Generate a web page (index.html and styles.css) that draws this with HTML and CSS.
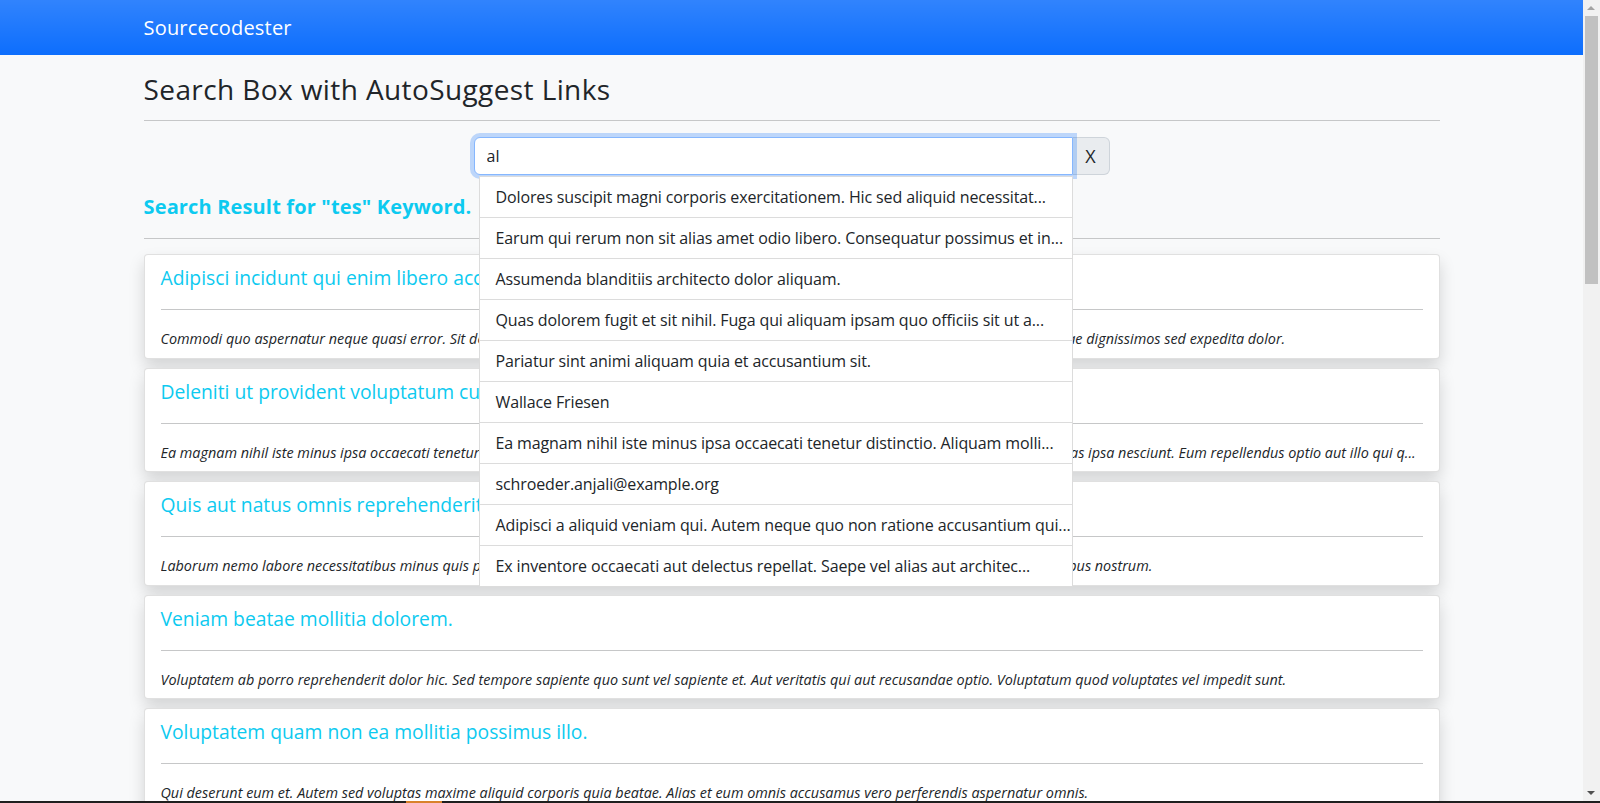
FILE: index.html
```html
<!DOCTYPE html>
<html lang="en">
<head>
<meta charset="utf-8">
<title>Search Box with AutoSuggest Links</title>
<link rel="stylesheet" href="styles.css">
</head>
<body>
<nav class="navbar">
  <div class="container">
    <a class="brand" href="#">Sourcecodester</a>
  </div>
</nav>
<main class="container">
  <h3 class="page-title">Search Box with AutoSuggest Links</h3>
  <hr class="rule">
  <div class="search-row">
    <div class="search-group">
      <div class="input-wrap">
        <input class="search-input" type="text" value="al">
        <ul class="suggest">
          <li class="suggest-item">Dolores suscipit magni corporis exercitationem. Hic sed aliquid necessitat...</li>
          <li class="suggest-item">Earum qui rerum non sit alias amet odio libero. Consequatur possimus et in...</li>
          <li class="suggest-item">Assumenda blanditiis architecto dolor aliquam.</li>
          <li class="suggest-item">Quas dolorem fugit et sit nihil. Fuga qui aliquam ipsam quo officiis sit ut a...</li>
          <li class="suggest-item">Pariatur sint animi aliquam quia et accusantium sit.</li>
          <li class="suggest-item">Wallace Friesen</li>
          <li class="suggest-item">Ea magnam nihil iste minus ipsa occaecati tenetur distinctio. Aliquam molli...</li>
          <li class="suggest-item">schroeder.anjali@example.org</li>
          <li class="suggest-item">Adipisci a aliquid veniam qui. Autem neque quo non ratione accusantium qui...</li>
          <li class="suggest-item">Ex inventore occaecati aut delectus repellat. Saepe vel alias aut architec...</li>
        </ul>
      </div>
      <button class="clear-btn" type="button">X</button>
    </div>
  </div>
  <h4 class="result-title">Search Result for "tes" Keyword.</h4>
  <hr class="rule result-rule">
  <div class="results">
    <div class="card">
      <h5 class="card-title">Adipisci incidunt qui enim libero accusamus.</h5>
      <hr class="card-rule">
      <p class="card-text">Commodi quo aspernatur neque quasi error. Sit dolorem ut nesciunt rerum voluptas. Quis eos omnis voluptatem aut quae. Ut aut re fugiat. Quae dignissimos sed expedita dolor.</p>
    </div>
    <div class="card">
      <h5 class="card-title">Deleniti ut provident voluptatum cum.</h5>
      <hr class="card-rule">
      <p class="card-text">Ea magnam nihil iste minus ipsa occaecati tenetur distinctio. Aliquam mollitia et quia quisquam. Et fugit est sint, sed. Voluptas et dolores voluptas ipsa nesciunt. Eum repellendus optio aut illo qui q...</p>
    </div>
    <div class="card">
      <h5 class="card-title">Quis aut natus omnis reprehenderit.</h5>
      <hr class="card-rule">
      <p class="card-text">Laborum nemo labore necessitatibus minus quis perspiciatis. Et aut aliquam dolorem eos sed. Quia enim sint aut esse vero. Et aut omnis doloribus nostrum.</p>
    </div>
    <div class="card">
      <h5 class="card-title">Veniam beatae mollitia dolorem.</h5>
      <hr class="card-rule">
      <p class="card-text">Voluptatem ab porro reprehenderit dolor hic. Sed tempore sapiente quo sunt vel sapiente et. Aut veritatis qui aut recusandae optio. Voluptatum quod voluptates vel impedit sunt.</p>
    </div>
    <div class="card">
      <h5 class="card-title">Voluptatem quam non ea mollitia possimus illo.</h5>
      <hr class="card-rule">
      <p class="card-text">Qui deserunt eum et. Autem sed voluptas maxime aliquid corporis quia beatae. Alias et eum omnis accusamus vero perferendis aspernatur omnis.</p>
    </div>
    <div class="card">
      <h5 class="card-title">Aliquid testimonium sed quia.</h5>
      <hr class="card-rule">
      <p class="card-text">Est tempore aut sint quis. Nihil et aut est dolores. Quo repellat voluptatem aliquid.</p>
    </div>
  </div>
</main>
<div class="scrollbar">
  <span class="sb-up"></span>
  <span class="sb-thumb"></span>
  <span class="sb-down"></span>
</div>
<div class="bottom-edge"><span class="bottom-mark"></span></div>
</body>
</html>
```
FILE: styles.css
```css
html, body {
  margin: 0;
  padding: 0;
  height: 100%;
  overflow: hidden;
}
body {
  background: #f8f9fa;
  color: #212529;
  font-family: "Open Sans", "DejaVu Sans", sans-serif;
  font-size: 16px;
  padding-right: 17px;
  box-sizing: border-box;
}
.container {
  max-width: 1296px;
  padding: 0 12px;
  margin: 0 auto;
}
.navbar {
  height: 55px;
  background: #0d6efd linear-gradient(180deg, rgba(255,255,255,.15), rgba(255,255,255,0));
  display: flex;
  align-items: center;
}
.navbar .container {
  width: 100%;
  box-sizing: content-box;
}
.brand {
  color: #fff;
  text-decoration: none;
  font-size: 20px;
  line-height: 30px;
  letter-spacing: 0.2px;
}
.page-title {
  font-size: 28px;
  font-weight: 400;
  line-height: 34px;
  letter-spacing: 0.4px;
  margin: 17px 0 0;
}
.rule {
  border: 0;
  border-top: 1px solid #c6c7c8;
  margin: 14px 0 16px;
}
.search-row {
  display: flex;
  justify-content: center;
}
.search-group {
  display: flex;
  width: 636px;
}
.input-wrap {
  position: relative;
  flex: 1;
}
.search-input {
  box-sizing: border-box;
  width: 100%;
  height: 38px;
  font: inherit;
  font-size: 16px;
  color: #212529;
  padding: 6px 12px;
  border: 1px solid #86b7fe;
  border-radius: 6px 0 0 6px;
  box-shadow: 0 0 0 4px rgba(13,110,253,.25);
  outline: none;
  background: #fff;
  position: relative;
  z-index: 2;
}
.clear-btn {
  width: 37px;
  height: 38px;
  font: inherit;
  font-size: 18px;
  color: #212529;
  background: #e9ecef;
  border: 1px solid #ced4da;
  border-left: 0;
  border-radius: 0 6px 6px 0;
  padding: 0;
}
.suggest {
  position: absolute;
  top: 39px;
  left: 5px;
  width: 592px;
  margin: 0;
  padding: 0;
  list-style: none;
  background: #fff;
  border: 1px solid #dcdcdc;
  border-bottom: 0;
  z-index: 3;
}
.suggest-item {
  padding: 8px 16px;
  line-height: 24px;
  height: 24px;
  border-bottom: 1px solid #dcdcdc;
  white-space: nowrap;
  overflow: hidden;
  text-overflow: clip;
  font-size: 16px;
  letter-spacing: -0.12px;
}
.result-title {
  font-size: 20px;
  font-weight: 700;
  line-height: 24px;
  letter-spacing: 0.15px;
  color: #0dcaf0;
  margin: 20px 0 0;
}
.result-rule {
  margin: 19px 0 15px;
}
.card {
  background: #fff;
  border: 1px solid rgba(0,0,0,.12);
  border-radius: 4px;
  box-shadow: 0 8px 16px rgba(0,0,0,.15);
  padding: 11px 16px 8px;
  margin-bottom: 9px;
}
.card-title {
  font-size: 19.3px;
  font-weight: 400;
  line-height: 24px;
  color: #0dcaf0;
  margin: 0;
}
.card-rule {
  border: 0;
  border-top: 1px solid #c6c7c8;
  margin: 19px 0 18px;
}
.card-text {
  font-style: italic;
  font-size: 14.4px;
  line-height: 21.6px;
  margin: 0;
  white-space: nowrap;
  overflow: hidden;
  text-overflow: ellipsis;
}
.scrollbar {
  position: fixed;
  top: 0;
  right: 0;
  width: 17px;
  height: 100%;
  background: #f1f1f1;
}
.sb-thumb {
  position: absolute;
  left: 2px;
  top: 16px;
  width: 13px;
  height: 268px;
  background: #c1c1c1;
}
.sb-up, .sb-down {
  position: absolute;
  left: 4px;
  width: 0;
  height: 0;
  border-left: 4px solid transparent;
  border-right: 4px solid transparent;
}
.sb-up {
  top: 6px;
  border-bottom: 4px solid #a3a3a3;
}
.sb-down {
  bottom: 8px;
  border-top: 4px solid #505050;
}
.bottom-edge {
  position: fixed;
  left: 0;
  right: 0;
  bottom: 0;
  height: 2px;
  background: #1f1f1f;
}
.bottom-mark {
  position: absolute;
  left: 406px;
  top: 0;
  width: 36px;
  height: 2px;
  background: #d9822b;
}
```
